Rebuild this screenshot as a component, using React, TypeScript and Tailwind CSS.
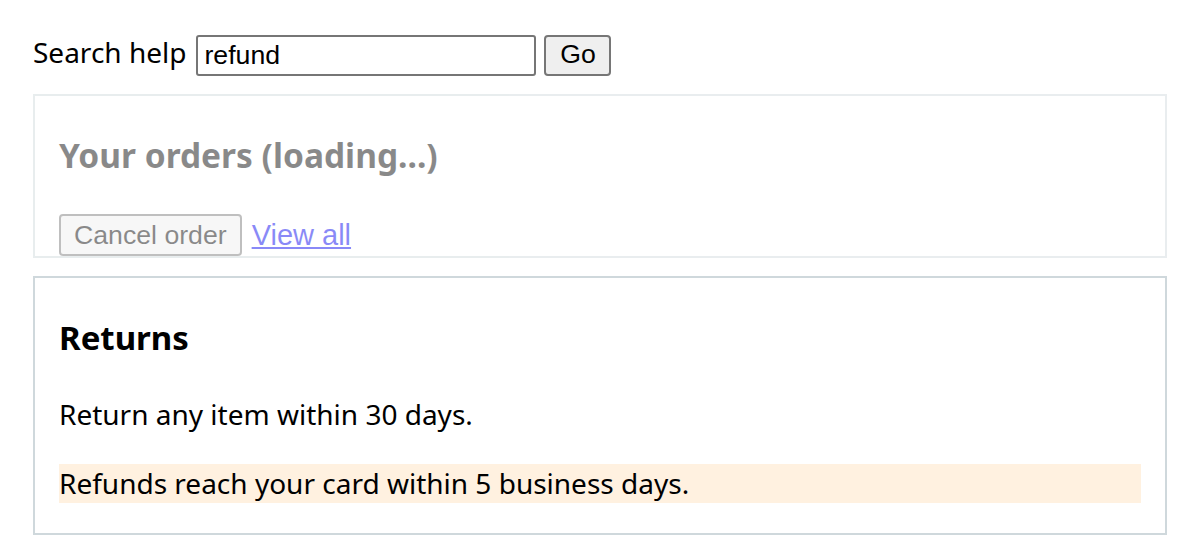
import React from "react";

const body = { fontFamily: '"Noto Sans", "Open Sans", sans-serif' };
const arial = { fontFamily: '"Liberation Sans", Arial, sans-serif' };

const App: React.FC = () => {
  return (
    <div className="min-h-[560px] bg-white px-[33px] pt-[32px] text-black" style={body}>
      <div className="flex items-center">
        <span className="pb-[6px] text-[28px] leading-[41px]">Search help</span>
        <input
          defaultValue="refund"
          className="ml-[10px] h-[41px] w-[340px] rounded-[3px] border-2 border-[#767676] bg-white pl-[6px] text-[26.67px] leading-[30px] text-black outline-none"
          style={arial}
        />
        <button
          className="ml-[8px] h-[41px] w-[67px] rounded-[4px] border-2 border-[#767676] bg-[#efefef] pb-[3px] text-[26.67px] leading-[30px] text-black"
          style={arial}
        >
          Go
        </button>
      </div>

      {/* orders panel, still loading */}
      <div className="mt-[15px] h-[164px] overflow-hidden border-2 border-[#cfd8dc] px-[24px] opacity-[0.46]">
        <h2 className="mt-[36px] text-[33.5px] font-bold leading-[47px]">Your orders (loading...)</h2>
        <div className="mt-[35px] flex items-center">
          <button
            className="h-[42px] rounded-[4px] border-2 border-[#767676] bg-[#efefef] px-[13px] pb-[1px] text-[26.67px] leading-[30px] text-black"
            style={arial}
          >
            Cancel order
          </button>
          <a href="#" className="ml-[10px] text-[29px] leading-[39px] text-[#0000ee] underline" style={arial}>
            View all
          </a>
        </div>
      </div>

      <div className="mt-[18px] border-2 border-[#cfd8dc] px-[24px] pb-[30px]">
        <h2 className="mt-[36px] text-[33px] font-bold leading-[47px]">Returns</h2>
        <p className="mt-[34px] text-[28px] leading-[39px]">Return any item within 30 days.</p>
        <p className="mt-[30px] bg-[#fff1e0] text-[28px] leading-[39px]">
          Refunds reach your card within 5 business days.
        </p>
      </div>
    </div>
  );
};

export default App;
